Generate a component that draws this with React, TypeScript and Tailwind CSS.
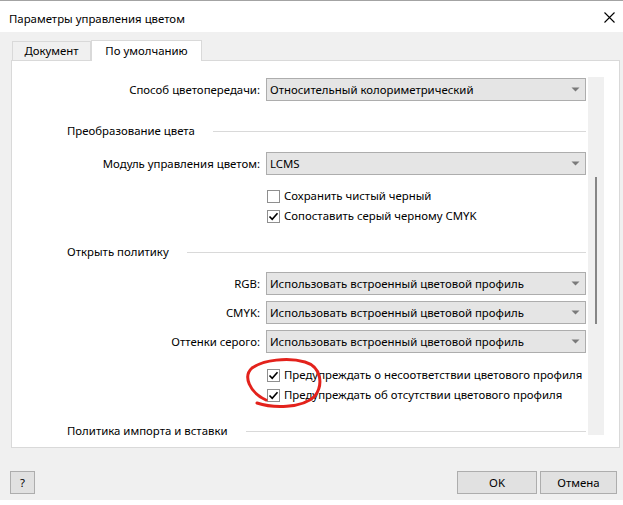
import React from "react";

const Arrow = () => (
  <svg width="9" height="5" viewBox="0 0 9 5" className="shrink-0">
    <path d="M0.5 0.5 H8.5 L4.5 4.5 Z" fill="#7a7a7a" />
  </svg>
);

const Combo = ({ text }: { text: string }) => (
  <div className="w-[320px] h-[23px] bg-[#e5e5e5] border border-[#adadad] flex items-center justify-between pl-[3px] pr-[5px] shrink-0">
    <span>{text}</span>
    <Arrow />
  </div>
);

const Row = ({ label, text, mt }: { label: string; text: string; mt: string }) => (
  <div className={`flex items-center ${mt}`}>
    <div className="w-[248px] text-right shrink-0">{label}</div>
    <div className="w-[6px] shrink-0" />
    <Combo text={text} />
  </div>
);

const Check = ({ checked, text, mt }: { checked: boolean; text: string; mt: string }) => (
  <div className={`flex items-center h-[16px] pl-[255px] ${mt}`}>
    <div className="w-[13px] h-[13px] border border-[#8f8f8f] bg-white flex items-center justify-center shrink-0">
      {checked && (
        <svg width="11" height="11" viewBox="0 0 11 11">
          <path d="M1.5 5.5 L4.2 8.3 L9.5 2.2" stroke="#000" strokeWidth="1.6" fill="none" />
        </svg>
      )}
    </div>
    <span className="ml-[4px] whitespace-nowrap">{text}</span>
  </div>
);

const Heading = ({ text, mt }: { text: string; mt: string }) => (
  <div className={`flex items-center h-[16px] pl-[55px] pr-[2px] ${mt}`}>
    <span className="whitespace-nowrap">{text}</span>
    <div className="flex-1 ml-[18px] h-px bg-[#d9d9d9]" />
  </div>
);

export default function App() {
  return (
    <div
      className="w-[623px] h-[505px] bg-white relative overflow-hidden text-[11.4px] text-black leading-none"
      style={{ fontFamily: '"Noto Sans", "Segoe UI", Arial, sans-serif' }}
    >
      <div className="h-[500px] bg-[#f0f0f0] border-t border-[#a3a3a3] flex flex-col">
        {/* title bar */}
        <div className="h-[31px] bg-white flex items-center justify-between pl-[9px] pr-[8px] shrink-0">
          <span className="mb-[-4px]">Параметры управления цветом</span>
          <svg width="11" height="11" viewBox="0 0 11 11" className="mt-[1px]">
            <path d="M0.5 0.5 L10.5 10.5 M10.5 0.5 L0.5 10.5" stroke="#000" strokeWidth="1.1" />
          </svg>
        </div>

        {/* tabs */}
        <div className="flex items-end h-[20px] mt-[8px] ml-[12px] shrink-0">
          <div className="w-[79px] h-[19px] border border-b-0 border-[#d9d9d9] bg-[#f0f0f0] flex items-center justify-center">
            Документ
          </div>
          <div className="w-[111px] h-[21px] -mb-px border border-b-0 border-[#d9d9d9] bg-white flex items-center justify-center relative z-10">
            По умолчанию
          </div>
        </div>

        {/* panel */}
        <div className="ml-[11px] w-[609px] h-[388px] border border-[#d9d9d9] bg-white shrink-0 pt-[16px]">
          <div className="flex">
            <div className="w-[576px] h-[370px] overflow-hidden flex flex-col">
              <div className="mt-[1px]">
                <Row label="Способ цветопередачи:" text="Относительный колориметрический" mt="" />
              </div>
              <Heading text="Преобразование цвета" mt="mt-[22px]" />
              <Row label="Модуль управления цветом:" text="LCMS" mt="mt-[13px]" />
              <Check checked={false} text="Сохранить чистый черный" mt="mt-[13px]" />
              <Check checked text="Сопоставить серый черному CMYK" mt="mt-[4px]" />
              <Heading text="Открыть политику" mt="mt-[20px]" />
              <Row label="RGB:" text="Использовать встроенный цветовой профиль" mt="mt-[12px]" />
              <Row label="CMYK:" text="Использовать встроенный цветовой профиль" mt="mt-[6px]" />
              <Row label="Оттенки серого:" text="Использовать встроенный цветовой профиль" mt="mt-[6px]" />
              <Check checked text="Предупреждать о несоответствии цветового профиля" mt="mt-[14px]" />
              <Check checked text="Предупреждать об отсутствии цветового профиля" mt="mt-[4px]" />
              <Heading text="Политика импорта и вставки" mt="mt-[20px]" />
            </div>
            <div className="w-[16px] h-[358px] bg-[#f0f0f0] shrink-0 pl-[7px] pt-[100px]">
              <div className="w-[2px] h-[147px] bg-[#868686]" />
            </div>
          </div>
        </div>

        {/* buttons */}
        <div className="flex items-center mt-[23px] px-[10px] shrink-0">
          <div className="w-[25px] h-[23px] bg-[#e1e1e1] border border-[#adadad] flex items-center justify-center">?</div>
          <div className="flex-1" />
          <div className="w-[80px] h-[23px] bg-[#e1e1e1] border border-[#adadad] flex items-center justify-center">OK</div>
          <div className="w-[77px] h-[23px] ml-[3px] bg-[#e1e1e1] border border-[#adadad] flex items-center justify-center mr-[-4px]">Отмена</div>
        </div>
      </div>

      {/* red hand-drawn circle */}
      <svg className="absolute inset-0 pointer-events-none" width="623" height="505" viewBox="0 0 623 505">
        <path
          d="M257 403 C 272 408, 302 409, 315 396 C 323 385, 322 367, 305 362 C 288 357, 263 360, 252 368 C 243 376, 249 392, 266 400"
          stroke="#e3221c"
          strokeWidth="3"
          fill="none"
          strokeLinecap="round"
        />
      </svg>
    </div>
  );
}
